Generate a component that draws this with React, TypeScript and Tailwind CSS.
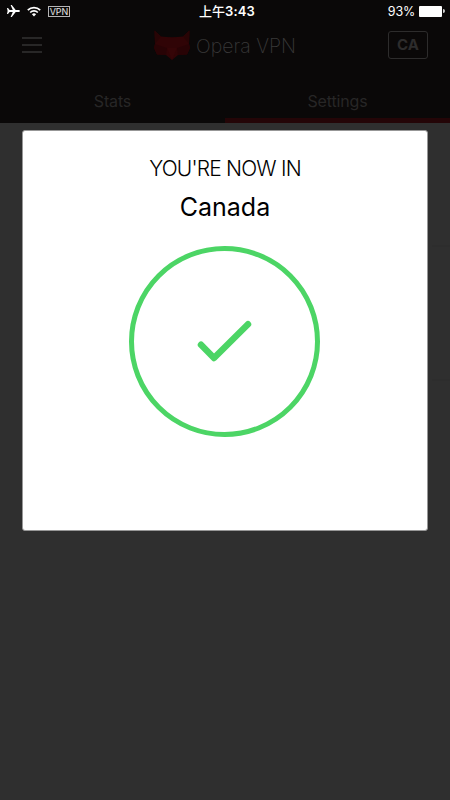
import type { ReactNode } from 'react';

const tabs = [
  { label: 'Stats', active: false },
  { label: 'Settings', active: true },
];

function StatusBar() {
  return (
    <div className="grid h-[22px] grid-cols-[1fr_auto_1fr] items-center pl-[7px] pr-[5px] text-white">
      <div className="flex items-center">
        <svg className="h-3 w-[13px]" viewBox="0 0 13 12" fill="currentColor" aria-hidden="true">
          <path d="M0 3h1l1.6 2.1h3.2L3.6 0h1.2l3.9 5.1H12q1 .3 1 .9t-1 .9H8.7L4.8 12H3.6l2.2-5.1H2.6L1 9H0l.6-3z" />
        </svg>
        <svg className="ml-[7px] h-[11px] w-[14px]" viewBox="0 0 14 11" aria-hidden="true">
          <g fill="none" stroke="currentColor" strokeWidth="1.7">
            <path d="M0.8 4.1a8.8 8.8 0 0 1 12.4 0" />
            <path d="M3.2 6.5a5.4 5.4 0 0 1 7.6 0" />
          </g>
          <path d="M7 10.4L4.9 8.2a3 3 0 0 1 4.2 0z" fill="currentColor" />
        </svg>
        <span className="ml-[7px] flex h-[11px] w-[22px] items-center justify-center border border-white/70 text-[9px] leading-none text-white/90">
          VPN
        </span>
      </div>
      <span className="flex items-center whitespace-nowrap pl-[2px] text-[13px] leading-none">
        <span className="font-medium">上午</span>
        <span className="font-semibold tracking-[0.15px]">3:43</span>
      </span>
      <div className="flex items-center justify-end">
        <span className="pt-[2px] text-[12.5px] leading-none tracking-[-0.2px]">93%</span>
        <span className="ml-[4px] h-[11px] w-[23px] rounded-[1px] border border-white/60 bg-white" />
        <span className="ml-px h-1 w-[2px] rounded-r-full bg-white/80" />
      </div>
    </div>
  );
}

function FoxLogo() {
  return (
    <svg className="h-[31px] w-9" viewBox="0 0 36 31" aria-hidden="true">
      <path d="M0.5 0.5L7 6.5Q18 8 29 6.5L35.5 0.5L35 14L36 18L33 24.5L24 25L18 30L12 25L3 24.5L0 18L1 14Z" fill="#300406" />
      <path d="M0.5 0.5L7 6.5L1 14ZM35.5 0.5L29 6.5L35 14Z" fill="#280405" />
      <path d="M1 14L13 18L12 25L3 24.5L0 18ZM35 14L23 18L24 25L33 24.5L36 18Z" fill="#280305" />
      <path d="M13 18H23L18 30Z" fill="#350507" />
    </svg>
  );
}

function Header() {
  return (
    <header className="flex h-[123px] flex-col bg-[#0a0808]">
      <StatusBar />
      <div className="flex h-[46px] items-center justify-between px-[22px]">
        <button type="button" className="flex w-10 flex-col gap-[5px]" aria-label="Menu">
          <span className="h-[2px] w-5 bg-[#282727]" />
          <span className="h-[2px] w-5 bg-[#282727]" />
          <span className="h-[2px] w-5 bg-[#282727]" />
        </button>
        <div className="flex items-center gap-[6px]">
          <FoxLogo />
          <span className="whitespace-nowrap pt-[3px] text-[19.5px] font-extralight leading-none text-[#393838]">
            Opera VPN
          </span>
        </div>
        <button
          type="button"
          className="flex h-7 w-10 items-center justify-center rounded-[3px] border border-[#2d2c2c] text-[15px] font-bold text-[#2d2c2c]"
        >
          CA
        </button>
      </div>
      <nav className="grid flex-1 grid-cols-2">
        {tabs.map((tab) => (
          <button
            key={tab.label}
            type="button"
            className={`flex items-center justify-center border-b-[5px] pt-[15px] text-[16px] leading-none tracking-[-0.15px] text-[#272626] ${
              tab.active ? 'border-[#240507]' : 'border-transparent'
            }`}
          >
            {tab.label}
          </button>
        ))}
      </nav>
    </header>
  );
}

function Modal({ children }: { children: ReactNode }) {
  return (
    <div className="absolute inset-x-[22px] top-[130px] flex h-[401px] flex-col items-center rounded-[3px] border border-[#979797] bg-white text-black">
      {children}
    </div>
  );
}

export default function App() {
  return (
    <div className="relative h-[800px] w-[450px] overflow-hidden bg-[#2f2f2f] font-['Inter','Noto_Sans_CJK_SC',sans-serif]">
      <Header />
      <main className="h-[390px]">
        <div className="ml-[432px] h-[124px] border-b-2 border-[#2d2d2d]" />
        <div className="ml-[432px] h-[134px] border-b-2 border-[#2d2d2d]" />
      </main>
      <Modal>
        <p className="mt-[26px] whitespace-nowrap text-[21px] font-light leading-6 tracking-[-0.8px]">YOU'RE NOW IN</p>
        <p className="mt-3 text-[25px] leading-7">Canada</p>
        <svg
          className="mr-px mt-[25px] h-[191px] w-[191px]"
          viewBox="0 0 191 191"
          fill="none"
          stroke="#4cd565"
          aria-hidden="true"
        >
          <circle cx="95.5" cy="95.5" r="93" strokeWidth="5" />
          <path d="M72 98.8L85 112L119 78.3" strokeWidth="6.5" strokeLinecap="round" strokeLinejoin="round" />
        </svg>
      </Modal>
    </div>
  );
}
